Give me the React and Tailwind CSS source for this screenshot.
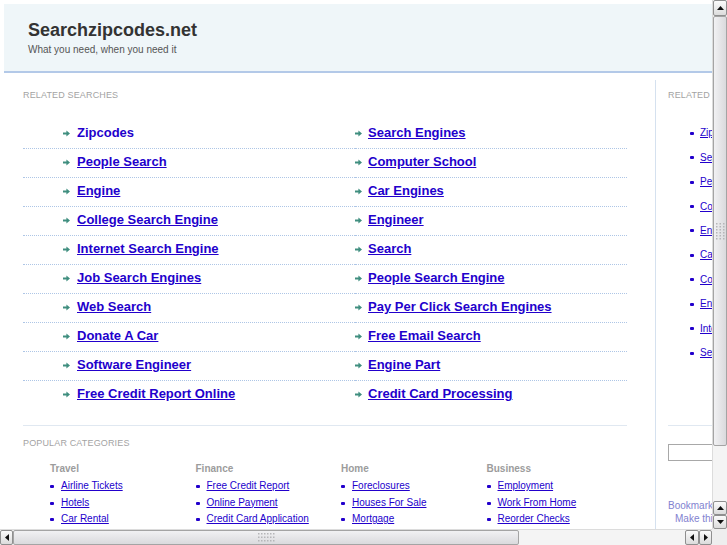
const leftLinks = [
  "Zipcodes",
  "People Search",
  "Engine",
  "College Search Engine",
  "Internet Search Engine",
  "Job Search Engines",
  "Web Search",
  "Donate A Car",
  "Software Engineer",
  "Free Credit Report Online",
];
const rightLinks = [
  "Search Engines",
  "Computer School",
  "Car Engines",
  "Engineer",
  "Search",
  "People Search Engine",
  "Pay Per Click Search Engines",
  "Free Email Search",
  "Engine Part",
  "Credit Card Processing",
];
const sideLinks = [
  "Zipcodes",
  "Search Engines",
  "People Search",
  "Computer School",
  "Engine",
  "Car Engines",
  "College Search Engine",
  "Engineer",
  "Internet Search Engine",
  "Search",
];
const categories = [
  { title: "Travel", items: ["Airline Tickets", "Hotels", "Car Rental"] },
  { title: "Finance", items: ["Free Credit Report", "Online Payment", "Credit Card Application"] },
  { title: "Home", items: ["Foreclosures", "Houses For Sale", "Mortgage"] },
  { title: "Business", items: ["Employment", "Work From Home", "Reorder Checks"] },
];

function Arrow() {
  return (
    <svg width="7" height="7" viewBox="0 0 7 7" className="mr-[7px] shrink-0">
      <path d="M0 2.6h3.4V0.6L7 3.5 3.4 6.4V4.4H0z" fill="#3f8e7f" />
    </svg>
  );
}

function Tri({ dir }) {
  if (dir === "up")
    return (
      <svg width="7" height="4" viewBox="0 0 7 4">
        <polygon points="0,4 3.5,0 7,4" fill="#111" />
      </svg>
    );
  if (dir === "down")
    return (
      <svg width="7" height="4" viewBox="0 0 7 4">
        <polygon points="0,0 3.5,4 7,0" fill="#111" />
      </svg>
    );
  if (dir === "left")
    return (
      <svg width="4" height="7" viewBox="0 0 4 7">
        <polygon points="4,0 0,3.5 4,7" fill="#111" />
      </svg>
    );
  return (
    <svg width="4" height="7" viewBox="0 0 4 7">
      <polygon points="0,0 4,3.5 0,7" fill="#111" />
    </svg>
  );
}

function GripV() {
  const dots = [];
  for (let r = 0; r < 6; r++)
    for (let c = 0; c < 3; c++)
      dots.push(<rect key={r + "-" + c} x={c * 3.5} y={r * 3} width="1.5" height="1.5" fill="#b5b5b8" />);
  return (
    <svg width="9" height="17" viewBox="0 0 9 17">
      {dots}
    </svg>
  );
}

function GripH() {
  const dots = [];
  for (let r = 0; r < 3; r++)
    for (let c = 0; c < 6; c++)
      dots.push(<rect key={r + "-" + c} x={c * 3} y={r * 3.5} width="1.5" height="1.5" fill="#b5b5b8" />);
  return (
    <svg width="17" height="9" viewBox="0 0 17 9">
      {dots}
    </svg>
  );
}

function SbBtn({ dir, className }) {
  return (
    <div
      className={
        "flex items-center justify-center rounded-[2px] border border-[#8f8f8f] bg-gradient-to-b from-[#fbfbfb] to-[#dcdcdc] " +
        className
      }
    >
      <Tri dir={dir} />
    </div>
  );
}

export default function App() {
  const cells = [];
  leftLinks.forEach((l, i) => {
    cells.push({ text: l, side: "l", last: i === leftLinks.length - 1, idx: i });
    cells.push({ text: rightLinks[i], side: "r", last: i === leftLinks.length - 1, idx: i });
  });

  return (
    <div className="w-[727px] h-[545px] overflow-hidden flex flex-col bg-white font-['Liberation_Sans',Arial,sans-serif]">
      <div className="flex h-[529px]">
        <div className="w-[712px] h-[529px] overflow-hidden">
          <div className="w-[900px] pt-[4px] pl-[4px]">
            <header className="h-[69px] bg-[#eff6f9] border-b-2 border-[#b3c9e8] pl-[24px] pt-[16px]">
              <div className="text-[18px] leading-[20px] font-bold text-[#333333]">Searchzipcodes.net</div>
              <div className="text-[10px] leading-[12px] mt-[4px] text-[#555555]">
                What you need, when you need it
              </div>
            </header>

            <div className="flex mt-[7px] h-[460px]">
              <div className="w-[652px] shrink-0 border-r border-[#d5e1ef] pl-[19px] pt-[10px]">
                <div className="text-[9px] leading-[11px] tracking-[0.15px] text-[#a3a3a3]">RELATED SEARCHES</div>
                <div className="mt-[19px] grid grid-cols-[332px_272px] w-[604px]">
                  {cells.map((c, k) => (
                    <div
                      key={k}
                      className={
                        "flex items-center pt-[5px] pb-[7px] border-b border-dotted " +
                        (c.last ? "border-transparent " : "border-[#aec6e6] ") +
                        (c.side === "l" ? "pl-[40px]" : "pl-0")
                      }
                    >
                      <Arrow />
                      <a
                        href="#"
                        className={
                          "text-[13px] leading-[16px] font-bold text-[#2200cc] whitespace-nowrap " +
                          (c.side === "l" && c.idx === 0 ? "no-underline" : "underline") +
                          (c.side === "r" ? " -ml-[1px]" : "")
                        }
                      >
                        {c.text}
                      </a>
                    </div>
                  ))}
                </div>
                <div className="mt-[15px] h-px w-[604px] bg-[#e0e8f1]" />
                <div className="mt-[12px] text-[9px] leading-[11px] tracking-[0.15px] text-[#a3a3a3]">
                  POPULAR CATEGORIES
                </div>
                <div className="mt-[14px] pl-[27px] grid grid-cols-[145.5px_145.5px_145.5px_145.5px]">
                  {categories.map((cat) => (
                    <div key={cat.title}>
                      <div className="text-[10px] leading-[12px] font-bold text-[#9c9c9c]">{cat.title}</div>
                      <ul className="mt-[3px]">
                        {cat.items.map((it) => (
                          <li key={it} className="flex items-center h-[16.5px]">
                            <span className="w-[4px] h-[3px] rounded-[1px] bg-[#2200cc] mr-[7px] mt-[1px] shrink-0" />
                            <a href="#" className="text-[10px] leading-[16.5px] text-[#2200cc] underline whitespace-nowrap">
                              {it}
                            </a>
                          </li>
                        ))}
                      </ul>
                    </div>
                  ))}
                </div>
              </div>

              <div className="flex-1 pl-[12px] pt-[10px]">
                <div className="text-[9px] leading-[11px] tracking-[0.15px] text-[#a3a3a3]">RELATED SEARCHES</div>
                <ul className="mt-[20px] pl-[22px]">
                  {sideLinks.map((s) => (
                    <li key={s} className="flex items-center h-[24.44px]">
                      <span className="w-[4px] h-[3px] rounded-[1px] bg-[#2200cc] mr-[6px] shrink-0" />
                      <a href="#" className="text-[10px] leading-[12px] text-[#2200cc] underline whitespace-nowrap">
                        {s}
                      </a>
                    </li>
                  ))}
                </ul>
                <div className="mt-[60px] h-px w-[200px] bg-[#e0e8f1]" />
                <div className="mt-[18px] h-[17px] w-[150px] border border-[#a8a8a8] bg-white" />
                <div className="mt-[38px] text-[10px] leading-[13px] text-[#8282d0]">Bookmark this page</div>
                <div className="pl-[7px] text-[10px] leading-[13px] text-[#8282d0]">Make this your homepage</div>
              </div>
            </div>
          </div>
        </div>

        <div className="w-[15px] h-[529px] flex flex-col bg-[#f1f1f1] border-l border-[#dcdcdc]">
          <SbBtn dir="up" className="h-[16px] shrink-0" />
          <div className="h-[430px] shrink-0 rounded-[2px] border border-[#a4a4a4] bg-gradient-to-r from-[#f1f1f3] to-[#dadadd] flex items-center justify-center">
            <GripV />
          </div>
          <div className="flex-1 bg-[#f4f4f4]" />
          <SbBtn dir="up" className="h-[14px] shrink-0" />
          <SbBtn dir="down" className="h-[14px] shrink-0" />
        </div>
      </div>

      <div className="flex h-[16px]">
        <div className="w-[712px] flex bg-[#f1f1f1] border-t border-[#dcdcdc]">
          <SbBtn dir="left" className="w-[13px] shrink-0" />
          <div className="w-[506px] shrink-0 rounded-[2px] border border-[#a4a4a4] bg-gradient-to-b from-[#f1f1f3] to-[#dadadd] flex items-center justify-center">
            <GripH />
          </div>
          <div className="flex-1 bg-[#f4f4f4]" />
          <SbBtn dir="left" className="w-[14px] shrink-0" />
          <SbBtn dir="right" className="w-[13px] shrink-0" />
        </div>
        <div className="w-[15px] bg-[#eeeeee]" />
      </div>
    </div>
  );
}
